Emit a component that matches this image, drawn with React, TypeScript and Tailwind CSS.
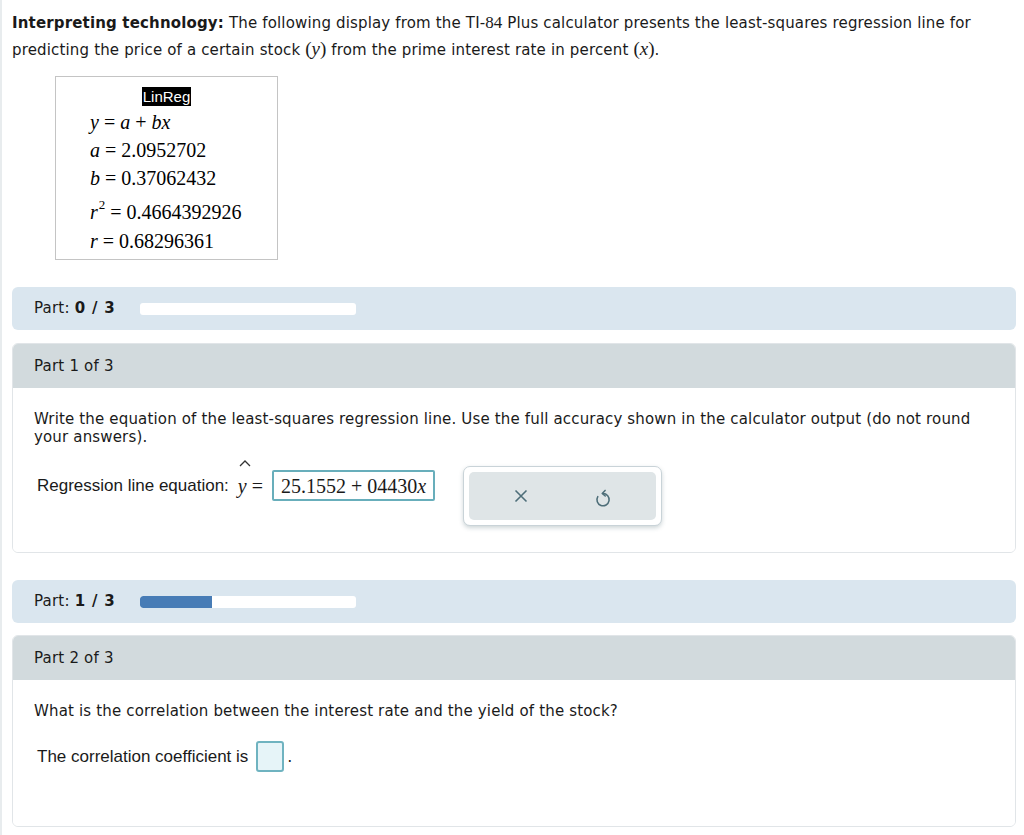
import React from 'react';

const sans = { fontFamily: '"DejaVu Sans", Verdana, sans-serif' };
const narrow = { fontFamily: '"Liberation Sans", Arial, sans-serif' };
const serif = { fontFamily: '"Liberation Serif", "Times New Roman", serif' };

const PartBar: React.FC<{ done: number; total: number }> = ({ done, total }) => (
  <div className="h-[43px] rounded-[6px] bg-[#dae6ef] flex items-center pl-[22px]">
    <span className="text-[15px] tracking-[0.2px] text-[#1a1a1a] w-[106px]">
      Part: <b className="tracking-[0.8px]">{done} / {total}</b>
    </span>
    <div className="w-[216px] h-[12px] rounded-[3px] bg-white overflow-hidden">
      <div className="h-full bg-[#477cb6] rounded-l-[3px]" style={{ width: `${(done / total) * 100}%` }} />
    </div>
  </div>
);

const PartCard: React.FC<{ title: string; bodyHeight: string; children: React.ReactNode }> = ({
  title,
  bodyHeight,
  children,
}) => (
  <div className="rounded-[6px] border border-[#e1e5e8] overflow-hidden">
    <div className="h-[44px] bg-[#d2dadd] flex items-center pl-[21px] text-[15px] tracking-[0.2px] text-[#1a1a1a]">
      {title}
    </div>
    <div className={`bg-white pl-[21px] pr-[10px] ${bodyHeight}`}>{children}</div>
  </div>
);

const App: React.FC = () => {
  return (
    <div
      className="min-h-screen bg-white border-l-2 border-[#e8ecee] pl-[10px] pr-[8px] pt-[10px] text-[#1a1a1a]"
      style={sans}
    >
      {/* Question intro */}
      <p className="text-[15px] tracking-[0.16px] leading-[26px] pr-[20px]">
        <b>Interpreting technology:</b> The following display from the TI-
        <span style={serif} className="text-[17px] tracking-normal">
          84
        </span>{' '}
        Plus calculator presents the least-squares regression line for predicting the price of a certain stock{' '}
        <span style={serif} className="text-[19px] tracking-normal">
          (<i>y</i>)
        </span>{' '}
        from the prime interest rate in percent{' '}
        <span style={serif} className="text-[19px] tracking-normal">
          (<i>x</i>)
        </span>
        .
      </p>

      {/* Calculator display */}
      <div className="mt-[13px] ml-[43px] w-[223px] h-[184px] border border-[#c4c4c4] bg-white flex flex-col">
        <div className="flex justify-center mt-[10px]">
          <span className="bg-black text-white text-[15px] leading-[19px] px-[1px]" style={narrow}>
            LinReg
          </span>
        </div>
        <div className="pl-[34px] text-[20px] text-black leading-[28px] mt-[2px]" style={serif}>
          <div>
            <i>y</i> = <i>a</i> + <i>bx</i>
          </div>
          <div>
            <i>a</i> = 2.0952702
          </div>
          <div>
            <i>b</i> = 0.37062432
          </div>
          <div className="mt-[6px]">
            <i>r</i>
            <sup className="text-[13px] -top-[0.75em] ml-[1px]">2</sup> = 0.4664392926
          </div>
          <div className="mt-[1px]">
            <i>r</i> = 0.68296361
          </div>
        </div>
      </div>

      {/* Part 1 */}
      <div className="mt-[27px]">
        <PartBar done={0} total={3} />
      </div>
      <div className="mt-[13px]">
        <PartCard title="Part 1 of 3" bodyHeight="h-[164px]">
          <p className="pt-[22px] text-[15px] tracking-[0.16px] leading-[18px]">
            Write the equation of the least-squares regression line. Use the full accuracy shown in the calculator
            output (do not round your answers).
          </p>
          <div className="flex items-start mt-[20px] pl-[3px]">
            <div className="flex items-center h-[31px] mt-[4px]">
              <span className="text-[17px]" style={narrow}>
                Regression line equation:
              </span>
              <span className="relative ml-[9px] text-[20px]" style={serif}>
                <span className="absolute left-[1px] -top-[12px]">
                  <svg width="12" height="8" viewBox="0 0 12 8">
                    <path d="M1 7 L6 2 L11 7" fill="none" stroke="#333" strokeWidth="1.3" />
                  </svg>
                </span>
                <i>y</i>
              </span>
              <span className="ml-[5px] text-[20px]" style={serif}>
                =
              </span>
              <div
                className="ml-[9px] h-[31px] px-[7px] border-2 border-[#68aebb] rounded-[2px] flex items-center text-[20px]"
                style={serif}
              >
                25.1552 + 04430<i>x</i>
              </div>
            </div>
            <div className="ml-[28px] w-[199px] h-[60px] rounded-[7px] border border-[#c9d3d8] bg-white shadow-[0_2px_4px_rgba(60,90,100,0.25)] p-[5px]">
              <div className="h-full rounded-[5px] bg-[#dfe5e7] flex items-center justify-around px-[12px]">
                <svg width="16" height="16" viewBox="0 0 16 16">
                  <path d="M2.5 2.5 L13.5 13.5 M13.5 2.5 L2.5 13.5" stroke="#4e6e79" strokeWidth="1.6" fill="none" />
                </svg>
                <svg width="18" height="20" viewBox="0 0 16 18" className="mt-[3px]">
                  <path
                    d="M8 5 A5.5 5.5 0 1 1 3.3 7.7"
                    stroke="#4e6e79"
                    strokeWidth="1.4"
                    fill="none"
                    strokeLinecap="round"
                  />
                  <path
                    d="M9.9 2.2 L7.3 4.9 L10 7.2"
                    stroke="#4e6e79"
                    strokeWidth="1.4"
                    fill="none"
                    strokeLinecap="round"
                    strokeLinejoin="round"
                  />
                </svg>
              </div>
            </div>
          </div>
        </PartCard>
      </div>

      {/* Part 2 */}
      <div className="mt-[27px]">
        <PartBar done={1} total={3} />
      </div>
      <div className="mt-[12px]">
        <PartCard title="Part 2 of 3" bodyHeight="h-[146px]">
          <p className="pt-[22px] text-[15px] tracking-[0.16px] leading-[18px]">
            What is the correlation between the interest rate and the yield of the stock?
          </p>
          <div className="flex items-center mt-[21px] pl-[3px]">
            <span className="text-[17px]" style={narrow}>
              The correlation coefficient is
            </span>
            <span className="ml-[8px] w-[28px] h-[31px] rounded-[3px] border-2 border-[#6fb3c0] bg-[#e6f4f8]" />
            <span className="ml-[3px] text-[16px]">.</span>
          </div>
        </PartCard>
      </div>
    </div>
  );
};

export default App;
